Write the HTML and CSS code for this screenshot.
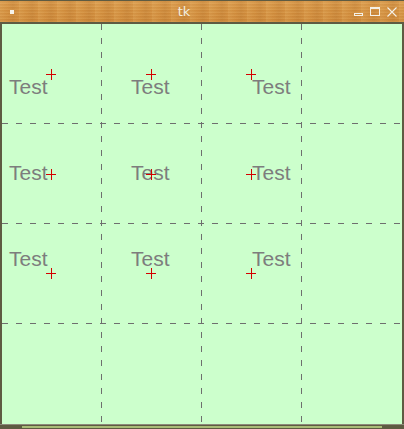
FILE: index.html
```html
<!DOCTYPE html>
<html>
<head>
<meta charset="utf-8">
<link rel="stylesheet" href="styles.css">
</head>
<body>
<div class="window">
  <div class="titlebar">
    <span class="app-icon"></span>
    <span class="title">tk</span>
    <div class="controls">
      <span class="btn-min"></span>
      <span class="btn-max"></span>
      <svg class="btn-close" width="10" height="10" viewBox="0 0 10 10"><path d="M0.5 0.5 L9.5 9.5 M9.5 0.5 L0.5 9.5" stroke="#f4f0e6" stroke-width="1.1" fill="none"/></svg>
    </div>
  </div>
  <div class="client">
    <svg class="canvas" width="400" height="400" viewBox="0 0 400 400">
      <g class="grid" stroke="#6e6e6e" stroke-width="1" stroke-dasharray="6 8" fill="none">
        <line x1="99.5" y1="0" x2="99.5" y2="400"/>
        <line x1="199.5" y1="0" x2="199.5" y2="400"/>
        <line x1="299.5" y1="0" x2="299.5" y2="400"/>
        <line x1="0" y1="99.5" x2="400" y2="99.5"/>
        <line x1="0" y1="199.5" x2="400" y2="199.5"/>
        <line x1="0" y1="299.5" x2="400" y2="299.5"/>
      </g>
      <g class="labels">
        <text x="7" y="70">Test</text>
        <text x="129" y="70">Test</text>
        <text x="250" y="70">Test</text>
        <text x="7" y="156">Test</text>
        <text x="129" y="156">Test</text>
        <text x="250" y="156">Test</text>
        <text x="7" y="242">Test</text>
        <text x="129" y="242">Test</text>
        <text x="250" y="242">Test</text>
      </g>
      <g class="marks" stroke="#d40000" stroke-width="1" fill="none">
        <path d="M44 50.5H54M49.5 45V56"/>
        <path d="M144 50.5H154M149.5 45V56"/>
        <path d="M244 50.5H254M249.5 45V56"/>
        <path d="M44 150.5H54M49.5 145V156"/>
        <path d="M144 150.5H154M149.5 145V156"/>
        <path d="M244 150.5H254M249.5 145V156"/>
        <path d="M44 249.5H54M49.5 244V255"/>
        <path d="M144 249.5H154M149.5 244V255"/>
        <path d="M244 249.5H254M249.5 244V255"/>
      </g>
    </svg>
  </div>
  <div class="statusbar"><span class="grip"></span></div>
</div>
</body>
</html>
```
FILE: styles.css
```css
html, body {
  margin: 0;
  padding: 0;
  background: #5e5b42;
}
.window {
  width: 404px;
  height: 429px;
  display: flex;
  flex-direction: column;
  background: #5e5b42;
  overflow: hidden;
}
.titlebar {
  margin-top: 1px;
  height: 21px;
  display: flex;
  align-items: center;
  padding-left: 10px;
  padding-right: 7px;
  background:
    repeating-linear-gradient(0deg, rgba(255,230,170,0.10) 0px, rgba(255,230,170,0.10) 1px, rgba(120,60,10,0.08) 2px, rgba(0,0,0,0) 3px),
    repeating-linear-gradient(90deg, rgba(255,220,150,0.12) 0px, rgba(0,0,0,0) 7px, rgba(130,70,20,0.10) 13px, rgba(0,0,0,0) 19px),
    linear-gradient(180deg, #d99a4c 0%, #d4903f 45%, #cf8a3a 100%);
}
.app-icon {
  width: 4px;
  height: 4px;
  background: #f6f2ea;
  margin-top: 1px;
}
.title {
  flex: 1;
  text-align: center;
  font-family: "DejaVu Sans", sans-serif;
  font-size: 13px;
  color: #f2eee0;
  line-height: 21px;
}
.controls {
  display: flex;
  align-items: flex-start;
  height: 10px;
  gap: 7px;
  margin-top: 0px;
}
.btn-min {
  width: 7px;
  height: 1px;
  border: 1px solid #f4f0e6;
  margin-top: 6px;
}
.btn-max {
  width: 8px;
  height: 6px;
  border: 1px solid #f4f0e6;
  border-top-width: 2px;
}
.btn-close {
  display: block;
}
.client {
  margin: 2px 2px 0 2px;
  width: 400px;
  height: 400px;
  background: #ccffcc;
}
.canvas {
  display: block;
}
.labels text {
  font-family: "Liberation Sans", Arial, sans-serif;
  font-size: 21px;
  fill: #7d7d7d;
}
.statusbar {
  height: 4px;
  border-top: 1px solid #8d8a7a;
  background: #5e5b42;
}
.grip {
  display: block;
  margin: 1px 0 0 22px;
  width: 360px;
  height: 2px;
  background: #a9bc78;
}
```
